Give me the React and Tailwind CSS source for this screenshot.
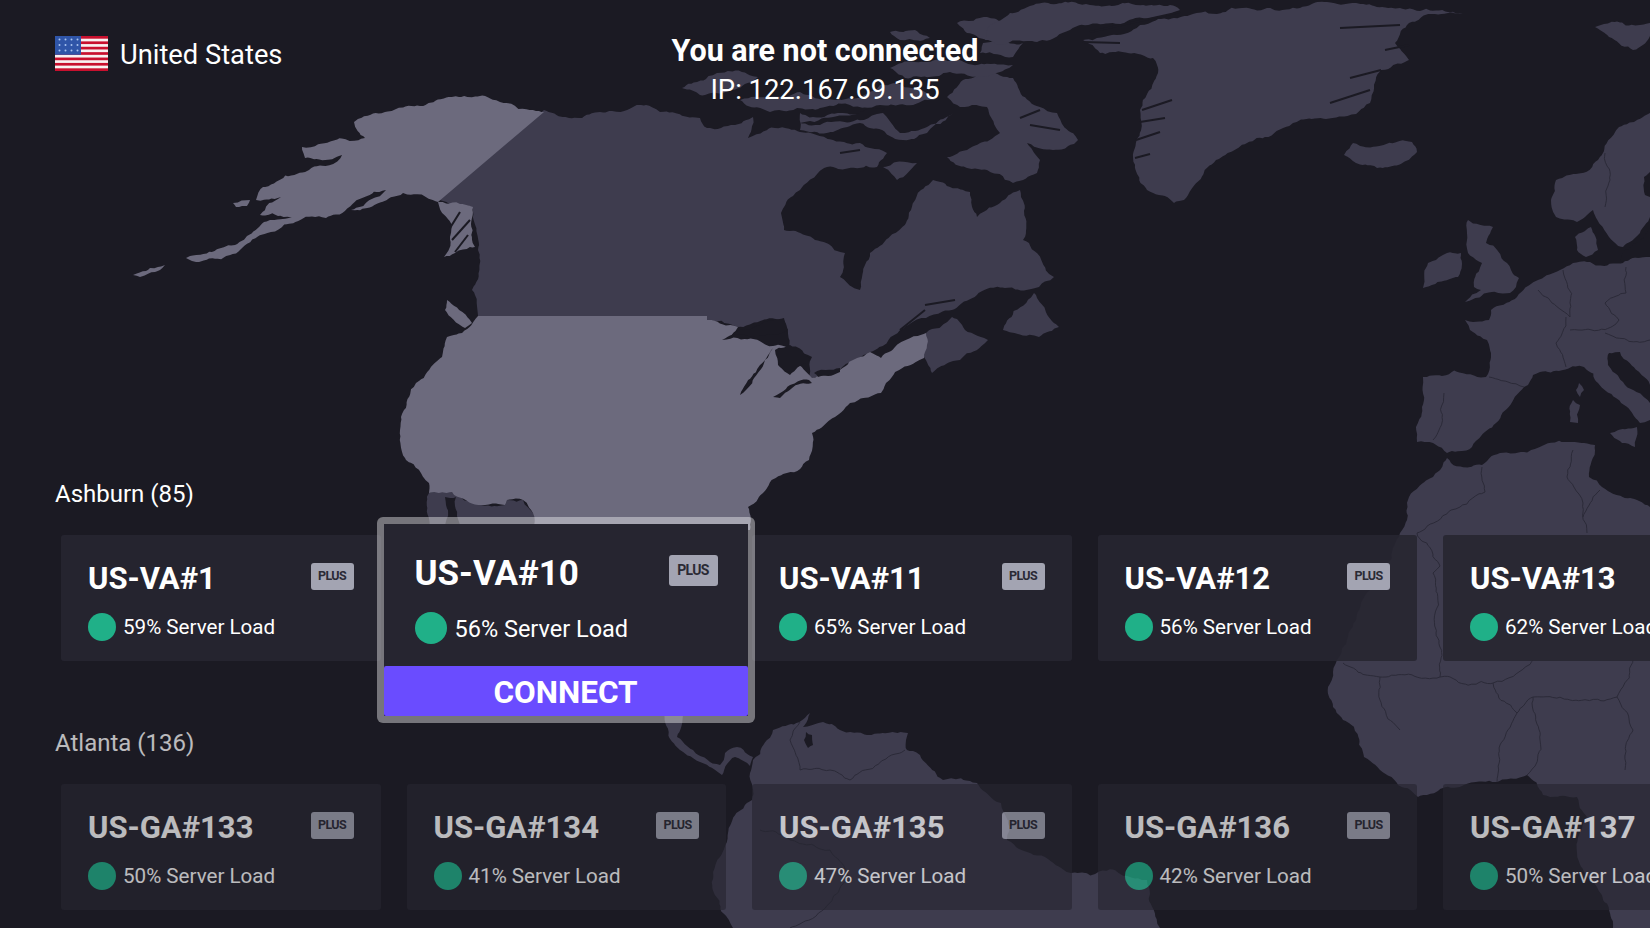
const BG = '#1b1a23';
const LAND = '#3e3c4e';
const HOME = '#6c6a7d';

const otherLand = [
  // Canada main
  '544,110 569,118 600,112 646,105 660,112 700,118 707,128 735,125 753,117 748,138 775,128 800,132 833,140 860,143 887,153 877,167 827,167 800,190 781,213 784,230 815,240 845,253 840,277 860,290 870,253 906,223 921,190 933,180 970,192 977,217 1000,203 1020,190 1023,240 1029,243 1054,277 1039,287 962,303 911,323 875,350 870,352 840,370 809,380 812,357 789,347 784,320 738,327 707,320 707,316 478,316 472,290 478,250 472,207 437,200',
  // Nova Scotia / New Brunswick
  '926,333 952,317 965,330 988,340 960,360 932,373 924,357',
  // Newfoundland
  '1003,330 1034,293 1059,327 1039,337',
  // Arctic islands
  '800,113 843,113 867,113 883,113 900,133 953,113 927,133 903,140 860,123 833,132 800,130',
  '682,88 717,73 758,77 740,88 700,95',
  '883,167 917,163 897,180',
  '740,100 800,92 860,98 880,85 915,88 935,100 880,105 820,108 770,112',
  '980,75 1013,78 1040,107 1057,113 1078,140 1053,150 1027,143 1040,160 1037,173 1013,183 987,170 947,157 967,150 1000,133 987,107 960,107 947,97 963,80',
  '940,60 1013,65 1000,72 950,72 905,78 890,68',
  '983,43 1023,43 1013,57 980,53',
  '957,23 987,17 1013,27 987,40 967,33',
  '1010,13 1090,5 1170,5 1180,10 1070,30 1050,40 1000,45 985,40 990,25',
  '890,32 915,30 930,38 900,40',
  // Greenland
  '1463,13 1409,23 1395,43 1409,60 1381,70 1370,103 1293,123 1247,143 1216,160 1184,200 1174,203 1147,190 1133,157 1140,110 1158,73 1153,58 1100,53 1083,40 1117,35 1190,15 1300,8 1400,8',
  // Iceland
  '1353,143 1412,142 1417,152 1377,168 1356,163 1344,155',
  // Svalbard
  '1595,27 1650,23 1650,36 1633,50 1609,37',
  // Britain, Ireland
  '1468,220 1493,227 1486,243 1507,263 1519,278 1510,293 1465,302 1481,290 1474,287 1482,263 1468,253 1467,233',
  '1461,253 1458,277 1423,288 1428,263 1447,253',
  // Scandinavia
  '1650,113 1619,127 1598,160 1556,180 1551,200 1556,217 1577,222 1593,210 1609,237 1623,247 1640,233 1650,217',
  '1575,237 1591,227 1598,250 1586,257 1577,250',
  // Continental Europe
  '1465,320 1489,320 1491,310 1517,297 1538,280 1560,270 1573,263 1590,262 1623,263 1650,257 1650,420 1640,423 1598,383 1584,367 1563,370 1533,375 1528,385 1524,387 1496,423 1472,447 1447,453 1433,443 1417,442 1416,427 1424,400 1423,377 1486,377 1491,353 1487,340 1470,330',
  '1579,383 1584,390 1580,397 1576,390',
  '1573,400 1580,405 1578,423 1570,422',
  '1610,433 1637,427 1635,447 1622,443',
  // Africa
  '1407,520 1409,497 1433,477 1447,458 1451,463 1482,465 1500,453 1570,442 1595,445 1589,477 1602,487 1637,500 1650,507 1650,928 1613,928 1597,887 1577,853 1587,817 1577,797 1543,795 1527,775 1497,782 1443,788 1418,797 1380,770 1364,757 1333,707 1328,687 1337,660 1370,590 1400,533',
  // Mexico and Central America
  '429,493 452,492 478,505 505,505 507,500 523,500 533,513 560,530 429,530',
  '655,700 690,700 677,737 693,750 720,765 725,753 737,747 753,757 750,766 735,757 722,775 700,762 680,750',
  // South America
  '753,760 773,730 810,713 803,727 823,722 840,730 867,735 908,733 907,750 920,755 943,780 977,783 1001,803 1007,840 1045,857 1071,873 1147,880 1160,928 733,928 714,893 720,857 728,833 752,800 750,773',
];

const homeLand = [
  // Alaska
  '544,112 500,102 459,97 420,106 385,112 354,122 365,138 302,147 305,158 342,155 309,170 263,187 256,200 281,197 260,215 302,213 235,245 186,258 192,261 240,250 326,218 386,190 351,210 403,193 438,202',
  '438,202 473,207 475,247 444,257 452,225',
  '133,275 150,268 165,265 160,270 140,277',
  '233,203 250,200 247,206 236,207',
  // Lower 48
  '478,316 707,316 707,320 738,327 722,340 773,346 789,347 812,378 840,370 870,352 881,358 926,333 924,358 886,383 881,393 850,403 835,417 812,433 809,460 763,493 748,507 750,530 533,530 533,513 523,500 507,500 505,505 478,505 452,492 429,493 429,483 406,460 401,417 404,410 416,383 442,357 447,337 462,333',
  '447,300 472,323 465,328 445,310',
];

const water = [
  // Great Lakes
  '728,338 760,325 784,318 788,330 770,335 745,335',
  '773,348 760,365 740,395 746,390 765,360',
  '790,345 810,358 790,375 778,365 775,350',
  '773,397 790,385 809,380 812,383 780,398',
  '814,373 840,368 840,372 818,377',
  // Baja
  '445,497 456,497 460,530 445,530',
  // Adriatic, Bothnia, Baltic
  '1609,353 1620,352 1650,385 1650,403 1625,385 1608,365',
  '1644,177 1650,172 1650,197 1645,195',
  '1650,228 1640,240 1625,250 1620,262 1650,256',
  // Maracaibo
  '806,732 812,735 813,745 808,748 804,740',
  // channel over the arctic coast
  '800,123 860,112 885,108 880,113 820,125',
];

const borders = [
  '1482,467 1485,492 1460,507 1417,533',
  '1573,450 1567,477 1583,503 1587,533',
  '1600,490 1583,517',
  '1417,533 1440,566 1433,573 1440,677',
  '1343,663 1380,677 1440,677 1493,683 1533,660',
  '1380,677 1380,700 1400,730',
  '1493,683 1517,713 1500,745 1497,782',
  '1517,713 1533,697 1570,700 1617,697 1633,660',
  '1617,697 1633,730 1625,770',
  '1533,697 1540,740 1527,775',
  '1444,393 1433,440',
  '1489,377 1524,387',
  '1605,153 1610,180 1605,207',
  '1538,290 1570,317 1563,270',
  '1566,317 1556,343 1566,367',
  '1626,267 1626,293 1605,303 1619,320 1570,330',
  '1605,333 1650,340',
  '800,722 790,740 800,770 830,770 850,780 905,750',
  '760,830 790,840 830,850 850,880 790,928',
];

// fjords and inlets, dark ticks cut in the coast
const fjords = [
  '1142,110 1172,100', '1140,122 1165,118', '1136,140 1160,132', '1135,158 1150,154',
  '1381,70 1350,78', '1370,90 1330,103', '1409,45 1385,50', '1400,25 1340,28',
  '1083,42 1120,43', '1180,12 1090,32',
  '470,220 452,240', '468,235 455,252', '460,212 450,228',
  '840,153 860,150', '1040,110 1020,118', '1060,130 1030,125',
  '900,330 925,310', '925,305 955,300',
];

// small seeded random so the coast comes out the same every time
function makeRandom(seed) {
  let s = seed;
  return () => {
    s = (s * 9301 + 49297) % 233280;
    return s / 233280 - 0.5;
  };
}

function isStraightEdge(a, b) {
  // 49th parallel and Alaska border stay straight, also the picture edges
  if (a[1] === b[1] && Math.abs(a[0] - b[0]) > 100) return true;
  if (a[0] === 1650 && b[0] === 1650) return true;
  if (a[1] === 928 && b[1] === 928) return true;
  if (a[1] === 530 && b[1] === 530) return true;
  if (Math.abs(a[0] - b[0]) > 100 && Math.abs(a[0] - 544) < 2) return true;
  if (Math.abs(a[0] - b[0]) > 100 && Math.abs(b[0] - 544) < 2) return true;
  return false;
}

function roughEdge(a, b, rnd, out) {
  const len = Math.hypot(a[0] - b[0], a[1] - b[1]);
  if (len < 5) {
    out.push(b);
    return;
  }
  const amp = len * 0.22;
  const mid = [(a[0] + b[0]) / 2 + rnd() * amp, (a[1] + b[1]) / 2 + rnd() * amp];
  roughEdge(a, mid, rnd, out);
  roughEdge(mid, b, rnd, out);
}

function roughen(points, seed) {
  const pts = points.split(' ').map((p) => p.split(',').map(Number));
  const rnd = makeRandom(seed * 137 + 11);
  const out = [];
  pts.forEach((a, i) => {
    const b = pts[(i + 1) % pts.length];
    if (isStraightEdge(a, b)) out.push(b);
    else roughEdge(a, b, rnd, out);
  });
  return out.map((p) => p[0].toFixed(1) + ',' + p[1].toFixed(1)).join(' ');
}

// same as roughen but the line stays open, no way back to the first point
function roughenLine(points, seed) {
  const pts = points.split(' ').map((p) => p.split(',').map(Number));
  const rnd = makeRandom(seed * 137 + 11);
  const out = [pts[0]];
  for (let i = 0; i < pts.length - 1; i++) {
    roughEdge(pts[i], pts[i + 1], rnd, out);
  }
  return out.map((p) => p[0].toFixed(1) + ',' + p[1].toFixed(1)).join(' ');
}

function WorldMap() {
  return (
    <svg className="absolute inset-0" width="1650" height="928" viewBox="0 0 1650 928">
      {otherLand.map((p, i) => (
        <polygon key={i} points={roughen(p, i + 1)} fill={LAND} />
      ))}
      {homeLand.map((p, i) => (
        <polygon key={i} points={roughen(p, i + 40)} fill={HOME} />
      ))}
      {water.map((p, i) => (
        <polygon key={i} points={roughen(p, i + 70)} fill={BG} />
      ))}
      {fjords.map((p, i) => (
        <polyline key={i} points={p} fill="none" stroke={BG} strokeWidth="2" />
      ))}
      {borders.map((p, i) => (
        <polyline key={i} points={roughenLine(p, i + 90)} fill="none" stroke="#2b2a38" strokeWidth="1" />
      ))}
    </svg>
  );
}

function Flag() {
  const stripes = [0, 2, 4, 6, 8, 10, 12];
  const stars = [];
  for (let r = 0; r < 3; r++) {
    for (let c = 0; c < 4; c++) {
      stars.push(<circle key={r + '-' + c} cx={4.5 + c * 6} cy={3.5 + r * 5.5} r="1" fill="#a9c4f0" />);
    }
  }
  return (
    <svg width="53" height="35" viewBox="0 0 53 35" className="shrink-0">
      <rect width="53" height="35" fill="#f7f1f1" />
      {stripes.map((s) => (
        <rect key={s} y={(s * 35) / 13} width="53" height={35 / 13} fill="#c8102e" />
      ))}
      <rect width="26" height="18.8" fill="#2f55a8" />
      {stars}
    </svg>
  );
}

function ServerCard({ name, load }) {
  return (
    <div className="w-[319.5px] h-[126px] shrink-0 rounded-[3px] bg-[#272631]/90 pl-[27px] pr-[27px] pt-[27px]">
      <div className="flex justify-between items-start">
        <div className="text-[31px] leading-[34px] font-bold text-white">{name}</div>
        <div className="mt-[1px] w-[43px] h-[27px] rounded-[3px] bg-[#a3a4b2] flex items-center justify-center text-[12.5px] font-bold text-[#2a2a35] tracking-tighter">
          PLUS
        </div>
      </div>
      <div className="flex items-center mt-[16px]">
        <div className="w-[28px] h-[28px] rounded-full bg-[#20b088] shrink-0"></div>
        <div className="ml-[7px] mt-[1px] text-[20.6px] leading-[28px] text-white whitespace-nowrap">{load}% Server Load</div>
      </div>
    </div>
  );
}

function FocusedCard() {
  return (
    <div className="absolute left-[-30px] top-[-18px] z-10 w-[378px] h-[206px] rounded-[6px] border-[7px] border-white/40 bg-[#262530] bg-clip-padding flex flex-col">
      <div className="flex-1 pl-[31px] pr-[30px] pt-[31px]">
        <div className="flex justify-between items-start">
          <div className="text-[35px] leading-[38px] font-bold text-white">US-VA#10</div>
          <div className="w-[49px] h-[31px] rounded-[3px] bg-[#a3a4b2] flex items-center justify-center text-[14px] font-bold text-[#2a2a35] tracking-tighter">
            PLUS
          </div>
        </div>
        <div className="flex items-center mt-[17px]">
          <div className="w-[32px] h-[32px] rounded-full bg-[#20b088] shrink-0"></div>
          <div className="ml-[8px] mt-[3px] text-[23.5px] leading-[32px] text-white whitespace-nowrap">56% Server Load</div>
        </div>
      </div>
      <div className="h-[50px] bg-[#6a4cff] rounded-[2px] flex items-center justify-center pt-[3px] text-[31.5px] font-bold text-white">
        CONNECT
      </div>
    </div>
  );
}

const ashburn = [
  { name: 'US-VA#1', load: 59 },
  { name: 'US-VA#10', load: 56, focused: true },
  { name: 'US-VA#11', load: 65 },
  { name: 'US-VA#12', load: 56 },
  { name: 'US-VA#13', load: 62 },
];

const atlanta = [
  { name: 'US-GA#133', load: 50 },
  { name: 'US-GA#134', load: 41 },
  { name: 'US-GA#135', load: 47 },
  { name: 'US-GA#136', load: 42 },
  { name: 'US-GA#137', load: 50 },
];

export default function App() {
  return (
    <div className="relative w-[1650px] h-[928px] overflow-hidden bg-[#1b1a23] font-[Roboto,sans-serif] text-white">
      <WorldMap />

      <div className="relative">
        {/* Cabecera */}
        <div className="grid grid-cols-3 h-[107px] pt-[32px]">
          <div className="flex items-start pl-[55px] pt-[4px] gap-[12px]">
            <Flag />
            <span className="text-[27.3px] leading-[35px] mt-[2px]">United States</span>
          </div>
          <div className="flex flex-col items-center whitespace-nowrap">
            <div className="text-[30.5px] leading-[38px] font-bold">You are not connected</div>
            <div className="text-[27.4px] leading-[36px] mt-[2px]">IP: 122.167.69.135</div>
          </div>
          <div></div>
        </div>

        {/* Listas de servidores */}
        <div className="mt-[371px]">
          <div className="pl-[55px] pt-[1px] h-[30px] text-[24px] leading-[30px] mb-[27px]">Ashburn (85)</div>
          <div className="flex gap-[26px] pl-[61px]">
            {ashburn.map((s) =>
              s.focused ? (
                <div key={s.name} className="relative w-[319.5px] h-[126px] shrink-0">
                  <FocusedCard />
                </div>
              ) : (
                <ServerCard key={s.name} name={s.name} load={s.load} />
              )
            )}
          </div>

          <div className="opacity-70 mt-[66px]">
            <div className="pl-[55px] pt-[1px] h-[30px] text-[24px] leading-[30px] mb-[27px]">Atlanta (136)</div>
            <div className="flex gap-[26px] pl-[61px]">
              {atlanta.map((s) => (
                <ServerCard key={s.name} name={s.name} load={s.load} />
              ))}
            </div>
          </div>
        </div>
      </div>
    </div>
  );
}
